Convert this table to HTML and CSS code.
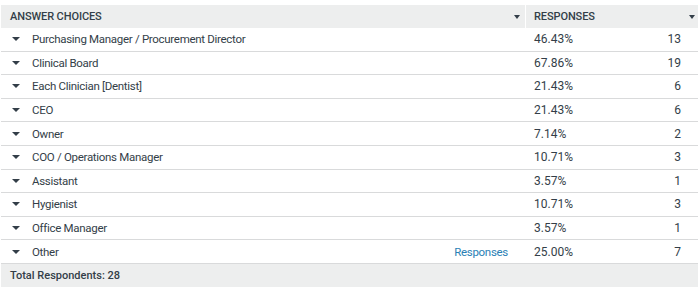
FILE: index.html
```html
<!DOCTYPE html>
<html>
<head>
<meta charset="utf-8">
<link rel="stylesheet" href="styles.css">
</head>
<body>
<div class="table">
  <div class="row head">
    <div class="cell c1"><span>ANSWER CHOICES</span><i class="caret"></i></div>
    <div class="cell c2"><span>RESPONSES</span><i class="caret"></i></div>
  </div>
  <div class="row"><div class="cell c1"><i class="caret"></i><span class="label">Purchasing Manager / Procurement Director</span></div><div class="cell c2"><span>46.43%</span><span class="num">13</span></div></div>
  <div class="row"><div class="cell c1"><i class="caret"></i><span class="label">Clinical Board</span></div><div class="cell c2"><span>67.86%</span><span class="num">19</span></div></div>
  <div class="row"><div class="cell c1"><i class="caret"></i><span class="label">Each Clinician [Dentist]</span></div><div class="cell c2"><span>21.43%</span><span class="num">6</span></div></div>
  <div class="row"><div class="cell c1"><i class="caret"></i><span class="label">CEO</span></div><div class="cell c2"><span>21.43%</span><span class="num">6</span></div></div>
  <div class="row"><div class="cell c1"><i class="caret"></i><span class="label">Owner</span></div><div class="cell c2"><span>7.14%</span><span class="num">2</span></div></div>
  <div class="row"><div class="cell c1"><i class="caret"></i><span class="label">COO / Operations Manager</span></div><div class="cell c2"><span>10.71%</span><span class="num">3</span></div></div>
  <div class="row"><div class="cell c1"><i class="caret"></i><span class="label">Assistant</span></div><div class="cell c2"><span>3.57%</span><span class="num">1</span></div></div>
  <div class="row"><div class="cell c1"><i class="caret"></i><span class="label">Hygienist</span></div><div class="cell c2"><span>10.71%</span><span class="num">3</span></div></div>
  <div class="row"><div class="cell c1"><i class="caret"></i><span class="label">Office Manager</span></div><div class="cell c2"><span>3.57%</span><span class="num">1</span></div></div>
  <div class="row"><div class="cell c1"><i class="caret"></i><span class="label">Other</span><a class="link">Responses</a></div><div class="cell c2"><span>25.00%</span><span class="num">7</span></div></div>
  <div class="foot">Total Respondents: 28</div>
</div>
</body>
</html>
```
FILE: styles.css
```css
html, body { margin: 0; padding: 0; background: #fff; }
body {
  font-family: Roboto, "Liberation Sans", sans-serif;
  font-size: 12px;
  color: #333e48;
}
.table {
  margin: 5px 2px 0 1px;
  width: 697px;
}
.row {
  display: grid;
  grid-template-columns: 524px 172px;
  column-gap: 1px;
  height: 23.6px;
  box-sizing: border-box;
  border-bottom: 1px solid #d9dadb;
}
.row.head {
  height: 23px;
  border-bottom: none;
}
.head .cell {
  background: #edeeee;
  font-size: 11px;
  font-weight: 500;
  color: #333e48;
  letter-spacing: -0.1px;
}
.cell {
  display: flex;
  align-items: center;
  min-width: 0;
}
.head .c1 { padding: 0 5px 0 9px; justify-content: space-between; }
.head .c2 { padding: 0 3px 0 8px; justify-content: space-between; }
.caret {
  width: 0; height: 0;
  border-left: 4px solid transparent;
  border-right: 4px solid transparent;
  border-top: 4px solid #333e48;
  display: block;
}
.head .caret {
  border-left-width: 3.5px;
  border-right-width: 3.5px;
}
.row:not(.head) .c1 {
  padding-left: 11px;
  font-size: 11.5px;
  letter-spacing: -0.3px;
}
.row:not(.head) .c1 .caret { margin-right: 12px; }
.label { flex: 1; }
.link { color: #2a7fb5; margin-right: 17px; }
.row:not(.head) .c2 { padding: 0 17px 0 8px; justify-content: space-between; }
.foot {
  height: 23px;
  background: #edeeee;
  display: flex;
  align-items: center;
  padding-left: 9px;
  font-size: 11px;
  font-weight: 500;
}
```
